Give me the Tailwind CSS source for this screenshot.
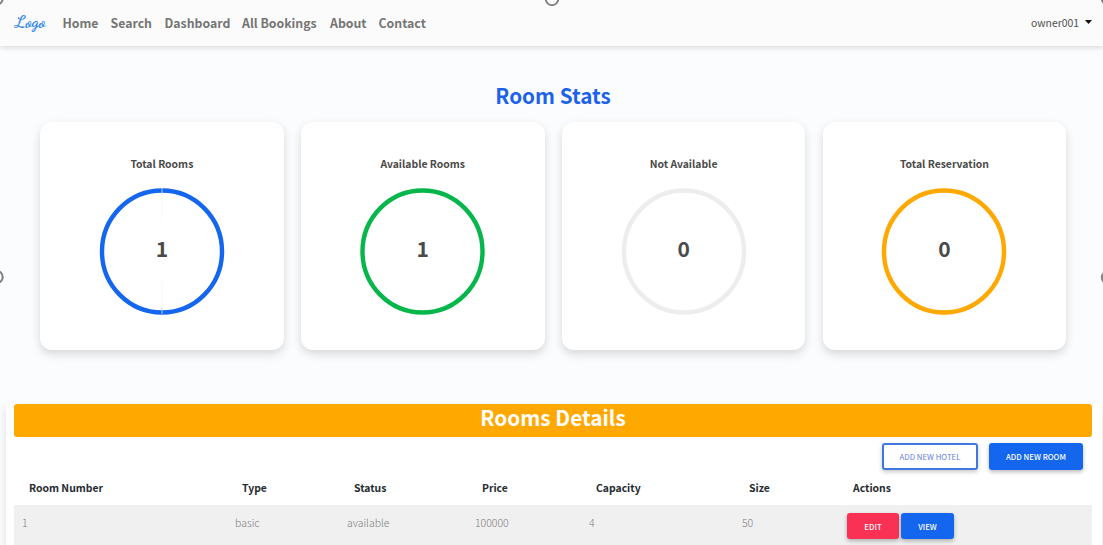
<!DOCTYPE html>
<html lang="en">
<head>
<meta charset="utf-8">
<title>Room Stats</title>
<script src="https://cdn.jsdelivr.net/npm/@tailwindcss/browser@4"></script>
</head>
<body class="relative h-[545px] w-[1103px] overflow-hidden bg-[#fbfcfe] font-['Noto_Sans_CJK_SC','Open_Sans',sans-serif] text-[#4a4a4a]">
<header class="relative flex h-[46px] items-center bg-[#fbfbfb] pr-[11px] pl-[15px] shadow-[0_1px_6px_rgba(0,0,0,0.17)]">
  <a class="mb-[2px] w-[47.500px] font-['Dancing_Script','Liberation_Serif',cursive] text-[17.500px] leading-[20px] font-bold text-[#2b86e8]">Logo</a>
  <nav class="flex grow gap-3 text-[12.3px] leading-[20px] font-bold whitespace-nowrap text-[#757575]">
    <a class="w-[36px]">Home</a><a class="w-[42px]">Search</a><a class="w-[65.5px]">Dashboard</a><a class="w-[76px]">All Bookings</a><a class="w-[36.500px]">About</a><a class="w-[48px]">Contact</a>
  </nav>
  <div class="flex items-center gap-[6px] text-[10.4px] leading-[20px] text-[#505050]"><span>owner001</span>
    <svg class="mb-[3px] h-1 w-[7px]" viewBox="0 0 7 4"><path d="M0 0H7L3.5 4Z" fill="#111"/></svg></div>
</header>
<main>
  <h1 class="mt-[33px] h-[43px] pl-[3px] text-center text-[20.7px] leading-[32px] font-bold text-[#1d62ea]"><span>Room Stats</span></h1>
  <section class="flex gap-[17.200px] pl-[40px]">
    <article class="flex h-[228px] w-[243.700px] flex-col items-center rounded-[12px] bg-white pt-[32px] shadow-[0_4px_10px_rgba(0,0,0,0.15)]">
      <h2 class="text-[10.4px] leading-[20px] font-bold"><span>Total Rooms</span></h2>
      <div class="mt-[14px] grid h-[126px] w-[126px] place-items-center">
        <svg class="col-start-1 row-start-1 overflow-visible" width="126" height="126" viewBox="0 0 126 126"><ellipse cx="63" cy="63.500" rx="60" ry="61" fill="none" stroke="#1466ee" stroke-width="4.4"/><path d="M63 0V6M63 120V126" stroke="#a9cbfa"/><path d="M63 6V33M63 93V120" stroke="#f6f9fe"/></svg>
        <strong class="col-start-1 row-start-1 -mt-[6px] text-[21px] leading-[28px]">1</strong>
      </div>
    </article>
    <article class="flex h-[228px] w-[243.700px] flex-col items-center rounded-[12px] bg-white pt-[32px] shadow-[0_4px_10px_rgba(0,0,0,0.15)]">
      <h2 class="text-[10.4px] leading-[20px] font-bold"><span>Available Rooms</span></h2>
      <div class="mt-[14px] grid h-[126px] w-[126px] place-items-center">
        <svg class="col-start-1 row-start-1 overflow-visible" width="126" height="126" viewBox="0 0 126 126"><ellipse cx="62.500" cy="63.500" rx="60" ry="61" fill="none" stroke="#05b64a" stroke-width="4.4"/></svg>
        <strong class="col-start-1 row-start-1 -mt-[6px] text-[21px] leading-[28px]">1</strong>
      </div>
    </article>
    <article class="flex h-[228px] w-[243.700px] flex-col items-center rounded-[12px] bg-white pt-[32px] shadow-[0_4px_10px_rgba(0,0,0,0.15)]">
      <h2 class="text-[10.4px] leading-[20px] font-bold"><span>Not Available</span></h2>
      <div class="mt-[14px] grid h-[126px] w-[126px] place-items-center">
        <svg class="col-start-1 row-start-1 overflow-visible" width="126" height="126" viewBox="0 0 126 126"><ellipse cx="63" cy="63.500" rx="60" ry="61" fill="none" stroke="#ededed" stroke-width="4.4"/></svg>
        <strong class="col-start-1 row-start-1 -mt-[6px] text-[21px] leading-[28px]">0</strong>
      </div>
    </article>
    <article class="flex h-[228px] w-[243.700px] flex-col items-center rounded-[12px] bg-white pt-[32px] shadow-[0_4px_10px_rgba(0,0,0,0.15)]">
      <h2 class="text-[10.4px] leading-[20px] font-bold"><span>Total Reservation</span></h2>
      <div class="mt-[14px] grid h-[126px] w-[126px] place-items-center">
        <svg class="col-start-1 row-start-1 overflow-visible" width="126" height="126" viewBox="0 0 126 126"><ellipse cx="63" cy="63.500" rx="60" ry="61" fill="none" stroke="#ffa800" stroke-width="4.4"/></svg>
        <strong class="col-start-1 row-start-1 -mt-[6px] text-[21px] leading-[28px]">0</strong>
      </div>
    </article>
  </section>
  <section class="mt-[53.500px] ml-[6px] h-[141.500px] w-[1096px] bg-white pr-[10px] pl-[8px] shadow-[0_4px_8px_rgba(0,0,0,0.12)]">
    <h2 class="h-[33.500px] rounded-[3px] bg-[#ffa800] text-center text-[20.8px] leading-[27px] font-bold text-white"><span>Rooms Details</span></h2>
    <div class="flex h-[33px] justify-end gap-[11px] pt-[6px] pr-[9px] text-[7.8px] leading-[27px]">
      <button class="flex h-[27px] w-[96px] items-center justify-center rounded-[3px] border-2 border-[#4078e0] bg-white text-[#6480dc] shadow-[0_2px_4px_rgba(0,0,0,0.22)]">ADD NEW HOTEL</button>
      <button class="flex h-[27px] w-[94px] items-center justify-center rounded-[3px] bg-[#1466ee] font-medium text-white shadow-[0_2px_4px_rgba(0,0,0,0.28)]">ADD NEW ROOM</button>
    </div>
    <div class="grid h-[35px] grid-cols-[213px_112px_128px_114px_153px_104px_1fr] pt-[8px] pl-[15px] text-[10.4px] leading-[20px] font-bold text-[#262b30]">
      <span>Room Number</span><span>Type</span><span>Status</span><span>Price</span><span>Capacity</span><span>Size</span><span>Actions</span>
    </div>
    <div class="grid h-[40px] grid-cols-[213px_112px_128px_114px_153px_105px_1fr] bg-[#f0f0f0] pt-[8px] pl-[8px] text-[10.5px] leading-[20px] font-light text-[#7c7c7c]">
      <span>1</span><span>basic</span><span>available</span><span>100000</span><span>4</span><span>50</span>
      <span class="flex gap-[2px] text-[7.8px] font-medium text-white">
        <button class="h-[26px] w-[52px] rounded-[3px] bg-[#f93154] leading-[28px] shadow-[0_2px_4px_rgba(0,0,0,0.28)]">EDIT</button>
        <button class="h-[26px] w-[53px] rounded-[3px] bg-[#1466ee] leading-[28px] shadow-[0_2px_4px_rgba(0,0,0,0.28)]">VIEW</button>
      </span>
    </div>
  </section>
</main>
<svg class="pointer-events-none absolute inset-0" width="1103" height="545" fill="none" stroke="#808080" stroke-width="2"><circle cx="552" cy="-1" r="6.2"/><circle cx="-3.5" cy="277" r="6.2"/><circle cx="1108" cy="277.500" r="6.2"/><circle cx="-3.500" cy="-1.500" r="6.2"/><circle cx="1108" cy="-1.500" r="6.2"/></svg>
</body>
</html>
